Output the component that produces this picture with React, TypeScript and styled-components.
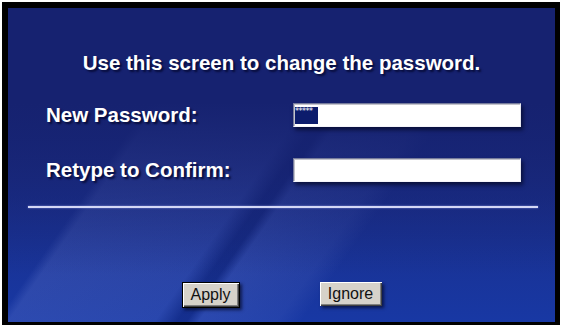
import React from 'react'
import styled, { createGlobalStyle } from 'styled-components'

const GlobalStyle = createGlobalStyle`
  html, body {
    margin: 0;
    padding: 0;
    background: #ffffff;
  }
  body {
    font-family: "Liberation Sans", Arial, sans-serif;
  }
`

const Shell = styled.div`
  box-sizing: border-box;
  width: 558px;
  height: 323px;
  margin: 2px 2px 1px 2px;
  border-style: solid;
  border-color: #000000;
  border-width: 6px 5px 3px 6px;
  background: #000;
`

const Panel = styled.div`
  box-sizing: border-box;
  width: 100%;
  height: 100%;
  padding-top: 43px;
  display: flex;
  flex-direction: column;
  background:
    linear-gradient(to bottom, #162270 0%, #162270 30%, rgba(22, 34, 112, 0.55) 55%, rgba(22, 34, 112, 0) 85%),
    linear-gradient(125deg,
      rgba(255, 255, 255, 0) 0px,
      rgba(255, 255, 255, 0) 170px,
      rgba(120, 140, 220, 0.22) 180px,
      rgba(120, 140, 220, 0.18) 300px,
      rgba(10, 20, 80, 0.25) 318px,
      rgba(10, 20, 80, 0.25) 326px,
      rgba(120, 140, 220, 0.2) 336px,
      rgba(120, 140, 220, 0.12) 400px,
      rgba(255, 255, 255, 0) 420px),
    linear-gradient(to bottom, #162270 0%, #1a2c84 50%, #1838a4 100%);
`

const Heading = styled.h1`
  margin: 0;
  font-size: 20.5px;
  line-height: 24px;
  font-weight: bold;
  color: #ffffff;
  text-align: center;
  text-shadow: 2px 2px 2px #070c3a;
`

const Form = styled.div`
  display: grid;
  grid-template-columns: 247px 228px;
  row-gap: 31px;
  align-items: center;
  margin-top: 28px;
  padding-left: 38px;
`

const Label = styled.div`
  font-size: 20.5px;
  font-weight: bold;
  color: #ffffff;
  text-shadow: 2px 2px 2px #070c3a;
  line-height: 24px;
`

const Field = styled.div`
  box-sizing: border-box;
  height: 24px;
  background: #ffffff;
  border: 1px solid;
  border-color: #767c9c #e8e8f0 #f4f4fa #767c9c;
  box-shadow: inset 1px 1px 0 #c4c4cc, 2px 3px 4px rgba(4, 8, 40, 0.75);
  padding: 3px 0 0 1px;
`

const Selected = styled.span`
  display: inline-block;
  width: 23px;
  height: 17px;
  background: #0c1c6c;
  color: #ffffff;
  font-family: "DejaVu Sans", sans-serif;
  font-size: 8px;
  line-height: 9px;
  letter-spacing: -0.5px;
  vertical-align: top;
  overflow: hidden;
  white-space: nowrap;
`

const Rule = styled.div`
  margin: 24px 17px 0 20px;
  height: 2px;
  background: #d4d8f6;
  box-shadow: 0 0 2px rgba(160, 170, 240, 0.8);
`

const Actions = styled.div`
  display: flex;
  justify-content: center;
  gap: 80px;
  margin-top: 74px;
`

const Button = styled.button<{ primary?: boolean; w: number }>`
  box-sizing: border-box;
  width: ${({ w }) => w}px;
  height: ${({ primary }) => (primary ? 26 : 24)}px;
  padding: 0;
  font-family: "Liberation Sans", Arial, sans-serif;
  font-size: 16px;
  color: #111111;
  background: #d6d2ca;
  border: ${({ primary }) => (primary ? '1px solid #000000' : 'none')};
  box-shadow:
    inset 1px 1px 0 #ffffff,
    inset -1px -1px 0 #404040,
    inset -2px -2px 0 #808080,
    2px 2px 3px rgba(4, 8, 40, 0.7);
  cursor: pointer;
`

export default function App() {
  return (
    <>
      <GlobalStyle />
      <Shell>
        <Panel>
          <Heading>Use this screen to change the password.</Heading>
          <Form>
            <Label>New Password:</Label>
            <Field>
              <Selected>*****</Selected>
            </Field>
            <Label>Retype to Confirm:</Label>
            <Field />
          </Form>
          <Rule />
          <Actions>
            <Button primary w={58}>Apply</Button>
            <Button w={62}>Ignore</Button>
          </Actions>
        </Panel>
      </Shell>
    </>
  )
}
